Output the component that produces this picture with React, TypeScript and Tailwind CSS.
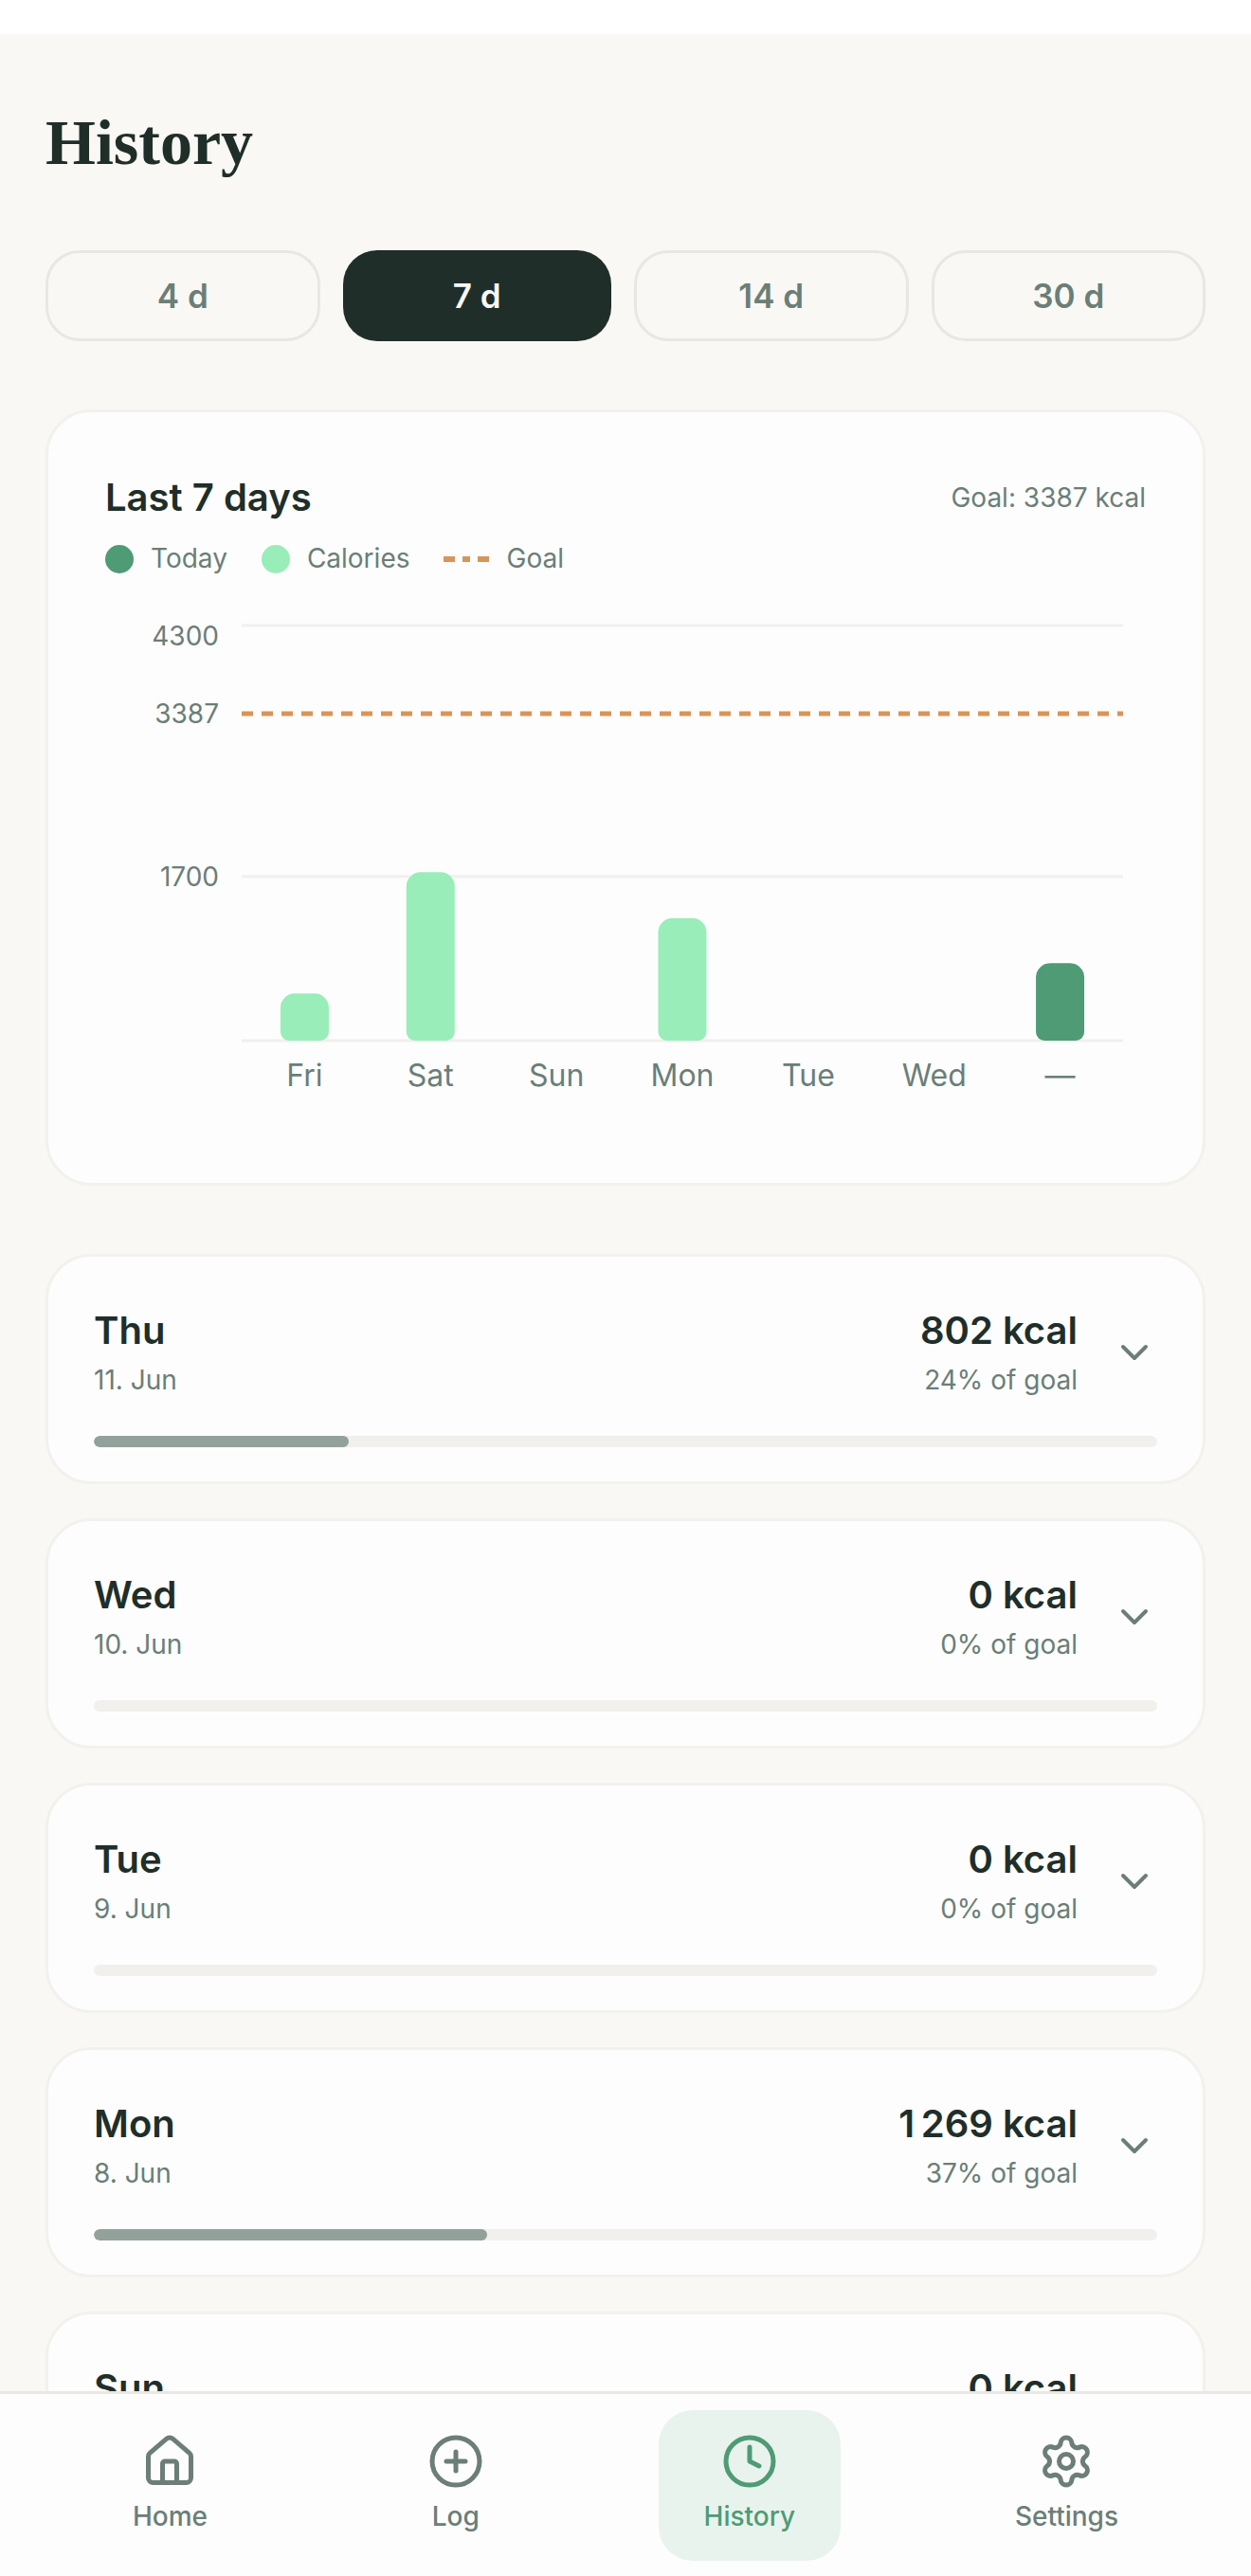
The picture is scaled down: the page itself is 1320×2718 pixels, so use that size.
import React, { useState } from 'react';
import { ChevronDown, CirclePlus, Clock, House, Settings } from 'lucide-react';

interface Day {
  name: string;
  date: string;
  kcal: number;
}

interface ChartEntry {
  label: string;
  kcal: number;
  today?: boolean;
}

const GOAL = 3387;
const CHART_MAX = 4300;

const ranges = [4, 7, 14, 30];

const days: Day[] = [
  { name: 'Thu', date: '11. Jun', kcal: 802 },
  { name: 'Wed', date: '10. Jun', kcal: 0 },
  { name: 'Tue', date: '9. Jun', kcal: 0 },
  { name: 'Mon', date: '8. Jun', kcal: 1269 },
  { name: 'Sun', date: '7. Jun', kcal: 0 },
];

const chartEntries: ChartEntry[] = [
  { label: 'Fri', kcal: 488 },
  { label: 'Sat', kcal: 1745 },
  { label: 'Sun', kcal: 0 },
  { label: 'Mon', kcal: 1269 },
  { label: 'Tue', kcal: 0 },
  { label: 'Wed', kcal: 0 },
  { label: '—', kcal: 802, today: true },
];

const navItems = [
  { label: 'Home', icon: House },
  { label: 'Log', icon: CirclePlus },
  { label: 'History', icon: Clock, active: true },
  { label: 'Settings', icon: Settings },
];

// Thin space between thousands, e.g. "1 269"
const formatKcal = (kcal: number) => String(kcal).replace(/\B(?=(\d{3})+$)/g, '\u2009');

// Plot area inside the 1098x552 chart canvas
const LEFT = 144;
const RIGHT = 1074;
const TOP = 24;
const BOTTOM = 462;
const BAR_WIDTH = 51;

const toY = (kcal: number) => BOTTOM - (kcal / CHART_MAX) * (BOTTOM - TOP);

// Bar outline with larger corners at the top than at the bottom
const barPath = (x: number, y: number) => {
  const r = 15;
  const b = 9;
  const right = x + BAR_WIDTH;
  return [
    `M${x} ${y + r}`,
    `A${r} ${r} 0 0 1 ${x + r} ${y}`,
    `H${right - r}`,
    `A${r} ${r} 0 0 1 ${right} ${y + r}`,
    `V${BOTTOM - b}`,
    `A${b} ${b} 0 0 1 ${right - b} ${BOTTOM}`,
    `H${x + b}`,
    `A${b} ${b} 0 0 1 ${x} ${BOTTOM - b}`,
    'Z',
  ].join(' ');
};

function CalorieChart() {
  const slot = (RIGHT - LEFT) / chartEntries.length;

  return (
    <svg viewBox="0 0 1098 552" className="block w-full h-auto" role="img" aria-label="Calories per day">
      {[TOP, toY(1700), BOTTOM].map((y) => (
        <line key={y} x1={LEFT} x2={RIGHT} y1={y} y2={y} stroke="#f1f0ee" strokeWidth={3} />
      ))}

      {chartEntries.map((entry, i) => {
        const center = LEFT + slot * (i + 0.5);
        return (
          <g key={entry.label + i}>
            {entry.kcal > 0 && (
              <path
                d={barPath(center - BAR_WIDTH / 2, toY(entry.kcal))}
                fill={entry.today ? '#4e9b75' : '#99edb9'}
              />
            )}
            <text x={center} y={510} textAnchor="middle" fontSize={32} fill="#6b7e77">
              {entry.label}
            </text>
          </g>
        );
      })}

      <line
        x1={LEFT}
        x2={RIGHT}
        y1={toY(GOAL)}
        y2={toY(GOAL)}
        stroke="#d89558"
        strokeWidth={5}
        strokeDasharray="12 9"
      />

      {/* The top label is kept below the edge of the plot */}
      <g fontSize={28} fill="#6b7e77" textAnchor="end">
        <text x={120} y={45}>{CHART_MAX}</text>
        <text x={120} y={toY(GOAL) + 10}>{GOAL}</text>
        <text x={120} y={toY(1700) + 10}>1700</text>
      </g>
    </svg>
  );
}

function DayCard({ name, date, kcal }: Day) {
  const percent = Math.round((kcal / GOAL) * 100);

  return (
    <li>
      <button
        type="button"
        className="block w-full rounded-[48px] border-3 border-[#f2f1ee] bg-[#fdfdfd] px-12 pt-12 pb-9 text-left"
      >
        <span className="flex items-center gap-9">
          <span className="flex-1">
            <span className="block text-[40px] leading-[60px] font-semibold text-[#202e29]">{name}</span>
            <span className="block text-[28px] leading-[45px] text-[#6b7e77]">{date}</span>
          </span>
          <span className="text-right">
            <span className="block text-[40px] leading-[60px] font-semibold text-[#202e29]">
              {formatKcal(kcal)} kcal
            </span>
            <span className="block text-[28px] leading-[45px] text-[#6b7e77]">{percent}% of goal</span>
          </span>
          <ChevronDown className="size-12 text-[#6b7e77]" />
        </span>
        <span className="mt-9 block h-3 overflow-hidden rounded-full bg-[#f1f0ed]">
          <span className="block h-full rounded-full bg-[#93a19b]" style={{ width: `${percent}%` }} />
        </span>
      </button>
    </li>
  );
}

export default function App() {
  const [range, setRange] = useState(7);

  return (
    <div className="flex h-screen flex-col bg-[#f9f8f4] font-[Inter,sans-serif] text-[#202e29]">
      {/* Status bar area */}
      <div className="h-9 shrink-0 bg-white" />

      <main className="min-h-0 flex-1 overflow-y-auto px-12 pt-[72px] [scrollbar-width:none]">
        <h1 className="font-['Liberation_Serif',serif] text-[68px] leading-[84px] font-bold">History</h1>

        <div className="mt-[72px] flex gap-6">
          {ranges.map((days) => (
            <button
              key={days}
              type="button"
              aria-pressed={days === range}
              onClick={() => setRange(days)}
              className={
                days === range
                  ? 'h-24 flex-1 rounded-[36px] bg-[#202e29] text-[35px] font-semibold text-[#f9f8f4]'
                  : 'h-24 flex-1 rounded-[36px] border-3 border-[#e8e7e3] text-[35px] font-semibold text-[#6b7e77]'
              }
            >
              {days} d
            </button>
          ))}
        </div>

        <section className="mt-[72px] rounded-[48px] border-3 border-[#f2f1ee] bg-[#fdfdfd] p-[60px]">
          <div className="flex items-center justify-between">
            <h2 className="text-[40px] leading-[60px] font-semibold">Last {range} days</h2>
            <p className="text-[28px] leading-[45px] text-[#6b7e77]">Goal: {GOAL} kcal</p>
          </div>
          <ul className="mt-3 flex items-center gap-9 text-[28px] leading-[45px] text-[#6b7e77]">
            <li className="flex items-center gap-[18px]">
              <span className="size-[30px] rounded-full bg-[#4e9b75]" />
              Today
            </li>
            <li className="flex items-center gap-[18px]">
              <span className="size-[30px] rounded-full bg-[#99edb9]" />
              Calories
            </li>
            <li className="flex items-center gap-[18px]">
              <svg width="48" height="6" viewBox="0 0 48 6" aria-hidden="true">
                <path d="M0 3h12M20 3h8M36 3h12" stroke="#d89558" strokeWidth={6} />
              </svg>
              Goal
            </li>
          </ul>
          <div className="mt-6">
            <CalorieChart />
          </div>
        </section>

        <ul className="mt-[72px] flex flex-col gap-9 pb-12">
          {days.map((day) => (
            <DayCard key={day.date} {...day} />
          ))}
        </ul>
      </main>

      <nav className="flex shrink-0 justify-around border-t-3 border-[#e9e8e4] bg-[#fdfdfd] px-6 pt-[17px] pb-4">
        {navItems.map(({ label, icon: Icon, active }) => (
          <a
            key={label}
            href={`#${label.toLowerCase()}`}
            aria-current={active ? 'page' : undefined}
            className={
              active
                ? 'flex flex-col items-center gap-1.5 rounded-[36px] bg-[#e9f3ed] px-12 py-6 text-[#4e9b75]'
                : 'flex flex-col items-center gap-1.5 rounded-[36px] px-12 py-6 text-[#6b7e77]'
            }
          >
            <Icon className="size-[60px]" />
            <span className="text-[28px] leading-[45px] font-medium">{label}</span>
          </a>
        ))}
      </nav>
    </div>
  );
}
